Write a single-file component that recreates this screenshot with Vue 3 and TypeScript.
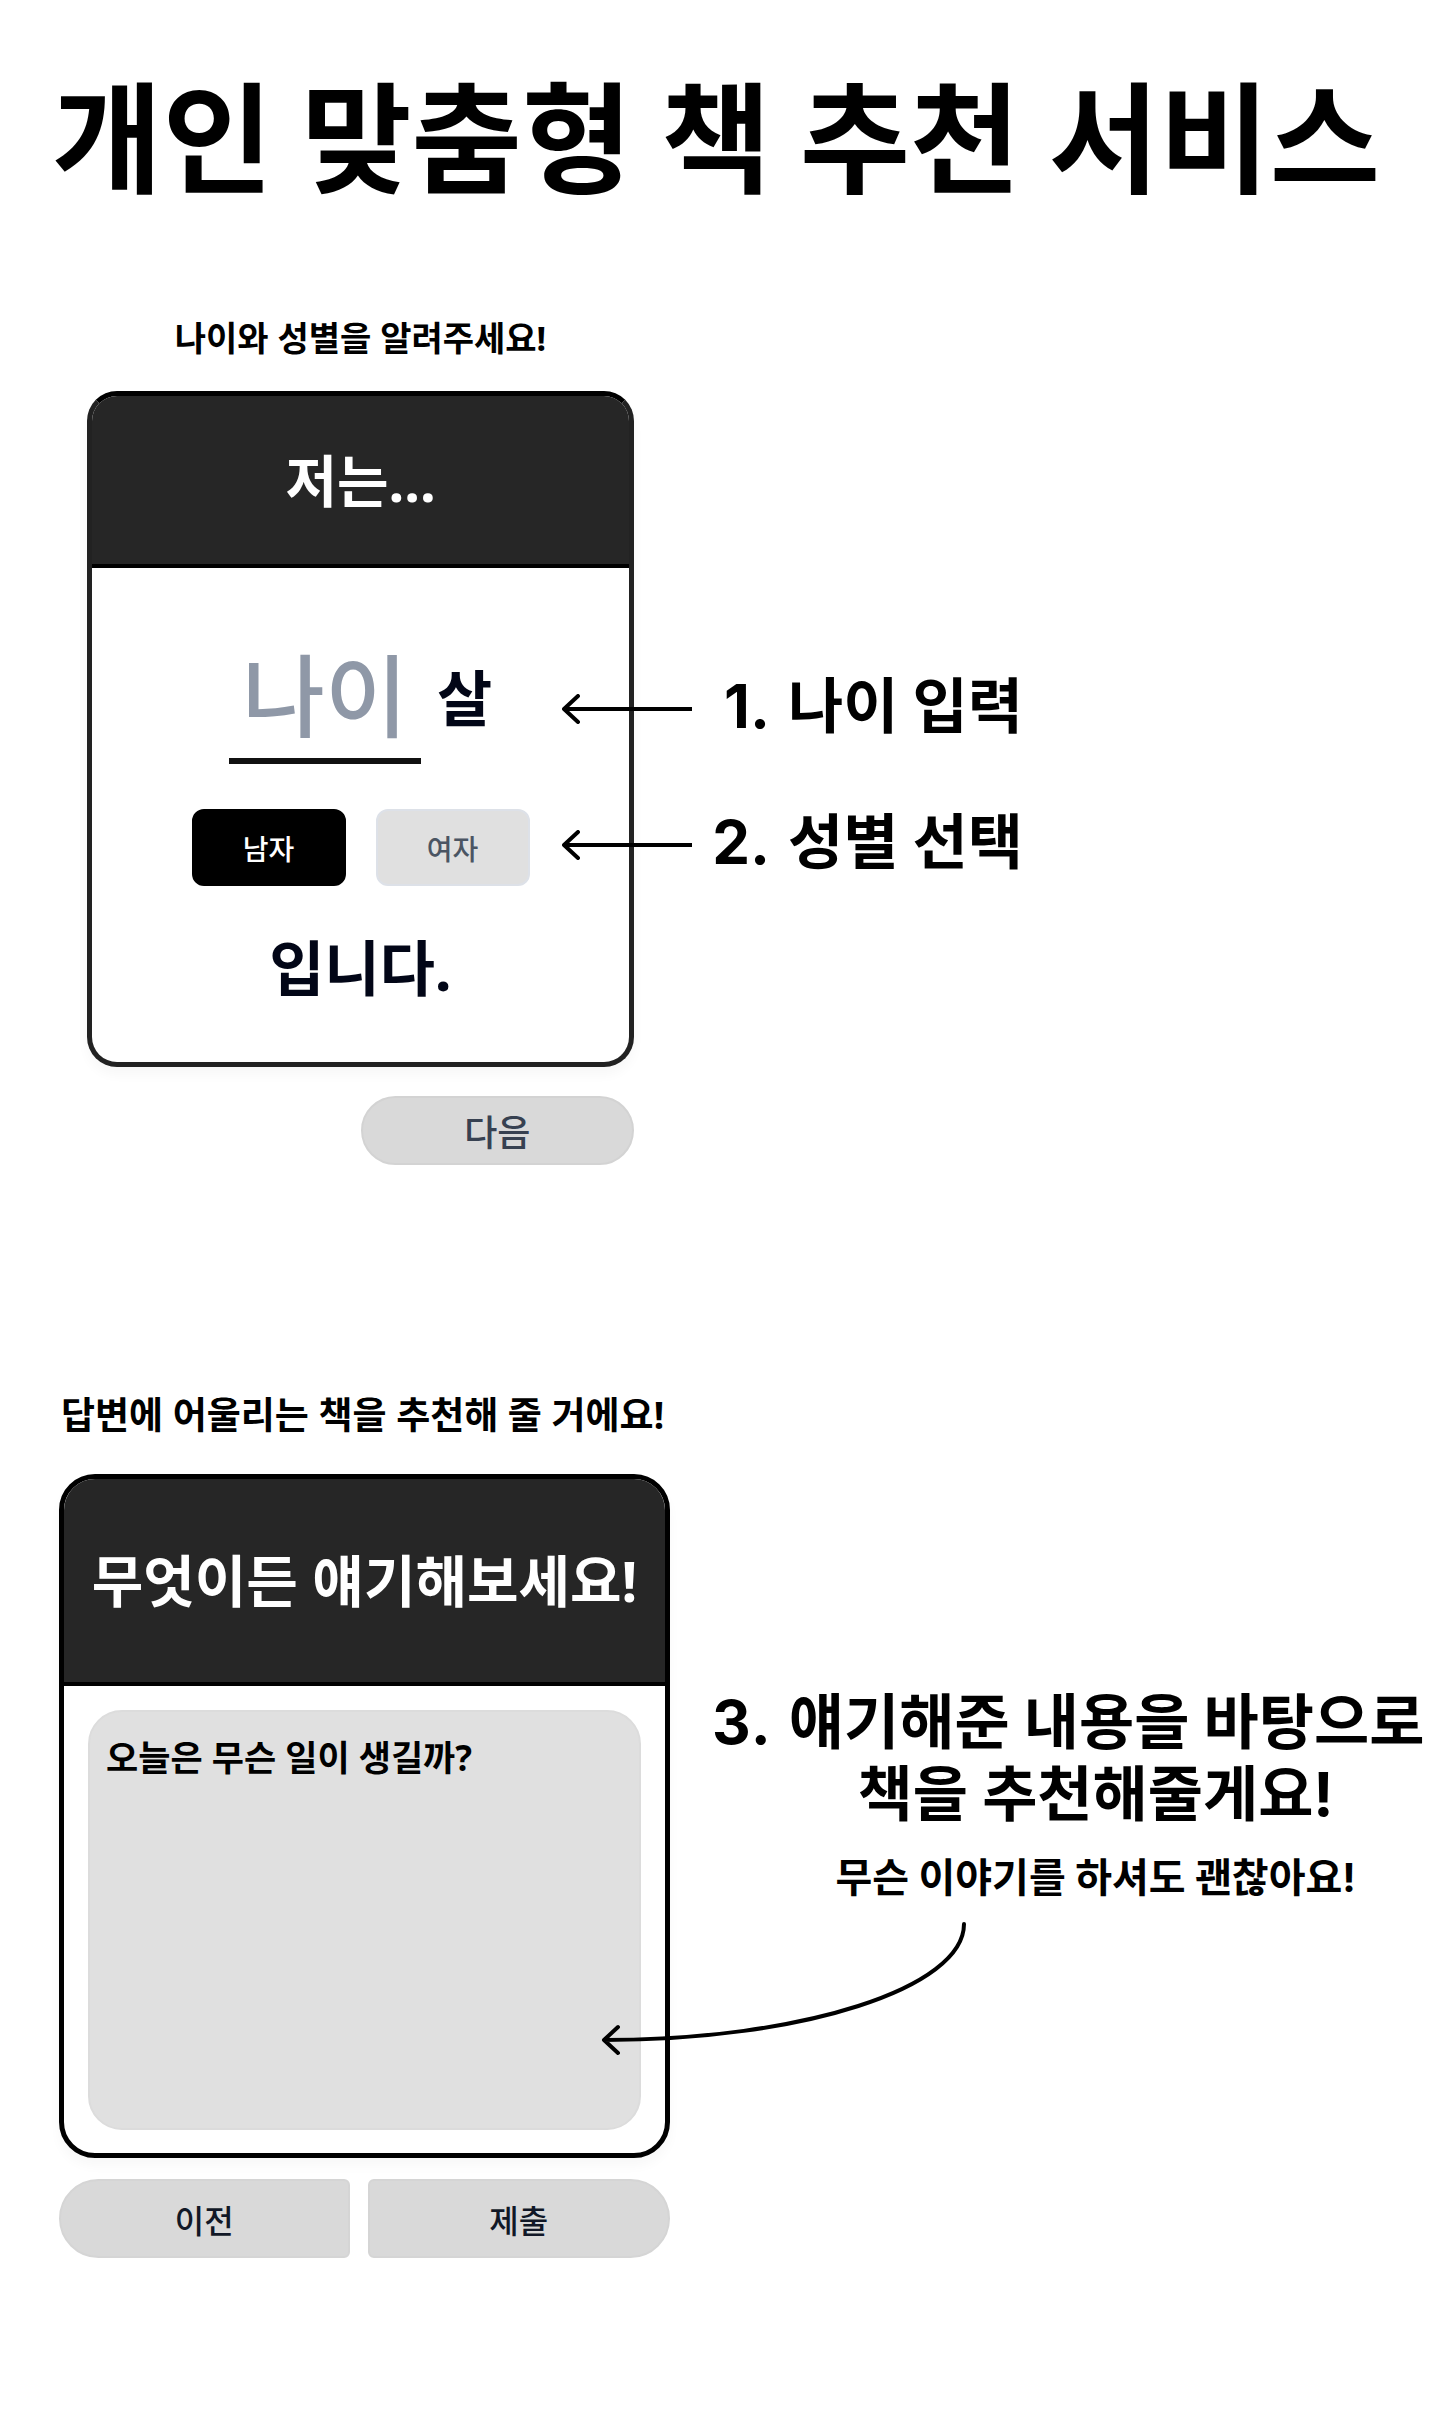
<script setup lang="ts">
import { ref } from 'vue'

type Gender = 'male' | 'female'

const genders: { value: Gender; label: string }[] = [
  { value: 'male', label: '남자' },
  { value: 'female', label: '여자' },
]

const age = ref('')
const gender = ref<Gender>('male')
const story = ref('오늘은 무슨 일이 생길까?')
</script>

<template>
  <main class="page">
    <h1 class="title">개인 맞춤형 책 추천 서비스</h1>

    <section class="step step-profile">
      <form class="panel" @submit.prevent>
        <p class="caption">나이와 성별을 알려주세요!</p>
        <div class="card">
          <h2 class="card-head">저는...</h2>
          <div class="profile">
            <div class="age-row">
              <input id="age" v-model="age" class="age" type="text" inputmode="numeric" placeholder="나이" />
              <label for="age" class="age-unit">살</label>
            </div>
            <div class="genders" role="group" aria-label="성별">
              <button
                v-for="item in genders"
                :key="item.value"
                type="button"
                class="gender"
                :class="{ selected: gender === item.value }"
                :aria-pressed="gender === item.value"
                @click="gender = item.value"
              >
                {{ item.label }}
              </button>
            </div>
            <p class="ending">입니다.</p>
          </div>
        </div>
        <button type="submit" class="next">다음</button>
      </form>

      <div class="notes">
        <div class="note">
          <span class="num">1.</span>
          <p class="note-text">나이 입력</p>
          <svg class="arrow" viewBox="0 0 130 30" width="130" height="30" aria-hidden="true">
            <path d="M130 15H2M16 2L2 15L16 28" />
          </svg>
        </div>
        <div class="note">
          <span class="num">2.</span>
          <p class="note-text">성별 선택</p>
          <svg class="arrow" viewBox="0 0 130 30" width="130" height="30" aria-hidden="true">
            <path d="M130 15H2M16 2L2 15L16 28" />
          </svg>
        </div>
      </div>
    </section>

    <section class="step step-story">
      <form class="panel" @submit.prevent>
        <p class="caption">답변에 어울리는 책을 추천해 줄 거에요!</p>
        <div class="card">
          <h2 class="card-head">무엇이든 얘기해보세요!</h2>
          <div class="story-body">
            <textarea v-model="story" class="story" aria-label="이야기" spellcheck="false"></textarea>
          </div>
        </div>
        <div class="actions">
          <button type="button" class="action prev">이전</button>
          <button type="submit" class="action send">제출</button>
        </div>
      </form>

      <div class="notes">
        <div class="note">
          <span class="num">3.</span>
          <div class="note-body">
            <p class="note-text">얘기해준 내용을 바탕으로</p>
            <p class="note-text indent">책을 추천해줄게요!</p>
            <p class="note-sub indent">무슨 이야기를 하셔도 괜찮아요!</p>
          </div>
        </div>
        <svg class="curve" viewBox="0 0 366 134" width="366" height="134" aria-hidden="true">
          <path d="M363 2C363 66 201 118 3 118M17 105L3 118L17 131" />
        </svg>
      </div>
    </section>
  </main>
</template>

<style>
body {
  margin: 0;
  background: #fff;
}
</style>

<style scoped>
.page {
  box-sizing: border-box;
  padding: 69px 0 166px;
  background: #fff;
  color: #000;
  font-family: "Noto Sans", "Noto Sans CJK KR", sans-serif;
}

h1,
h2,
p {
  margin: 0;
}

button,
input,
textarea {
  box-sizing: border-box;
  border: 0;
  margin: 0;
  padding: 0;
  font-family: inherit;
  outline: none;
}

button {
  cursor: pointer;
}

.title {
  padding-left: 52px;
  font-family: Inter, "Noto Sans CJK KR", sans-serif;
  font-size: 120px;
  line-height: 144px;
  font-weight: 700;
  white-space: nowrap;
}

.step {
  display: grid;
  grid-template-columns: minmax(0, 712fr) minmax(0, 720fr);
}

.step-profile {
  margin-top: 103px;
}

.step-story {
  margin-top: 228px;
}

.panel {
  display: flex;
  flex-direction: column;
}

.step-profile .panel {
  padding: 0 78px 0 87px;
}

.step-story .panel {
  padding: 0 42px 0 59px;
}

.caption {
  font-weight: 700;
  line-height: 44px;
  text-align: center;
  white-space: nowrap;
}

.step-profile .caption {
  font-size: 34px;
}

.step-story .caption {
  padding-right: 4px;
  font-size: 37px;
}

.card {
  overflow: hidden;
  background: #fff;
  box-shadow: 0 8px 12px rgba(0, 0, 0, 0.03);
}

.step-profile .card {
  margin-top: 31px;
  border: 5px solid #222;
  border-top-color: #000;
  border-radius: 30px;
}

.step-story .card {
  margin-top: 37px;
  border: 5px solid #000;
  border-radius: 36px;
}

.card-head {
  border-bottom: 4px solid #000;
  background: #262626;
  color: #fff;
  font-size: 56px;
  font-weight: 700;
  text-align: center;
  white-space: nowrap;
}

.step-profile .card-head {
  line-height: 168px;
}

.step-story .card-head {
  line-height: 203px;
}

.profile {
  display: flex;
  flex-direction: column;
  align-items: center;
  padding: 64px 0 58px;
}

.age-row {
  display: flex;
  align-items: center;
  gap: 16px;
}

.age {
  width: 192px;
  height: 132px;
  border-bottom: 6px solid #111;
  background: transparent;
  color: #020617;
  font-size: 90px;
  font-weight: 500;
  text-align: center;
}

.age::placeholder {
  color: #8f98a7;
  opacity: 1;
}

.age-unit {
  color: #020617;
  font-size: 60px;
  line-height: 72px;
  font-weight: 700;
}

.genders {
  display: flex;
  gap: 30px;
  margin-top: 45px;
}

.gender {
  width: 154px;
  height: 77px;
  border: 2px solid #dde1e8;
  border-radius: 12px;
  background: #e0e0e0;
  color: #4b5563;
  font-size: 28px;
  font-weight: 500;
}

.gender.selected {
  border-color: #000;
  background: #000;
  color: #fff;
}

.ending {
  margin-top: 46px;
  color: #020617;
  font-size: 60px;
  line-height: 72px;
  font-weight: 700;
}

.next {
  align-self: flex-end;
  width: 50%;
  height: 69px;
  margin-top: 29px;
  border: 2px solid #d3d3d3;
  border-radius: 35px;
  background: #d9d9d9;
  color: #374151;
  font-size: 36px;
  font-weight: 500;
}

.story-body {
  display: flex;
  padding: 24px 24px 23px;
}

.story {
  flex: 1;
  min-width: 0;
  height: 420px;
  padding: 20px 16px;
  border: 2px solid #dcdcdc;
  border-radius: 34px;
  background: #e0e0e0;
  color: #000;
  font-size: 35px;
  line-height: 52px;
  font-weight: 700;
  resize: none;
}

.actions {
  display: flex;
  gap: 18px;
  margin-top: 21px;
}

.action {
  height: 79px;
  border: 2px solid #d5d5d5;
  background: #d9d9d9;
  color: #111827;
  font-size: 32px;
  font-weight: 500;
}

.prev {
  flex: 290;
  border-radius: 40px 6px 6px 40px;
}

.send {
  flex: 302;
  border-radius: 6px 40px 40px 6px;
}

.notes {
  position: relative;
  display: flex;
  flex-direction: column;
  gap: 64px;
  font-family: Inter, "Noto Sans CJK KR", sans-serif;
  font-weight: 700;
  white-space: nowrap;
}

.step-profile .notes {
  padding-top: 354px;
}

.step-story .notes {
  padding-top: 293px;
}

.note {
  position: relative;
  display: flex;
  font-size: 60px;
  line-height: 72px;
}

.num {
  flex: 0 0 58px;
  padding-right: 18px;
  font-kerning: none;
  text-align: right;
}

.note-body {
  display: flex;
  flex-direction: column;
  text-align: center;
}

.indent {
  padding-right: 22px;
}

.note-sub {
  margin-top: 24px;
  font-size: 40px;
  line-height: 48px;
}

.arrow,
.curve {
  position: absolute;
  fill: none;
  stroke: #000;
  stroke-width: 4px;
  stroke-linecap: round;
  stroke-linejoin: round;
}

.arrow {
  top: 24px;
  left: -150px;
}

.curve {
  top: 529px;
  left: -111px;
}
</style>
